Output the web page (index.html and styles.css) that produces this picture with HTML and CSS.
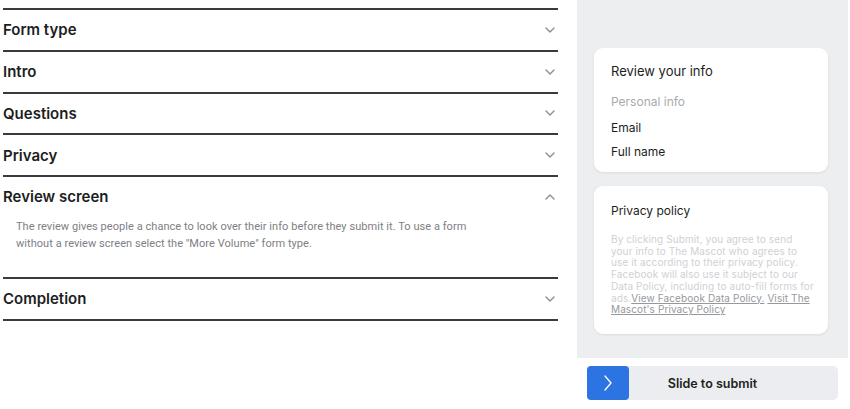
FILE: index.html
```html
<!DOCTYPE html>
<html lang="en">
<head>
<meta charset="utf-8">
<title>Form</title>
<link rel="stylesheet" href="styles.css">
</head>
<body>
<div class="page">
  <div class="settings">
    <div class="section">
      <div class="sec-head"><span>Form type</span><svg class="chev" viewBox="0 0 10 6"><path d="M1 1l4 4 4-4"/></svg></div>
    </div>
    <div class="section">
      <div class="sec-head"><span>Intro</span><svg class="chev" viewBox="0 0 10 6"><path d="M1 1l4 4 4-4"/></svg></div>
    </div>
    <div class="section">
      <div class="sec-head"><span>Questions</span><svg class="chev" viewBox="0 0 10 6"><path d="M1 1l4 4 4-4"/></svg></div>
    </div>
    <div class="section">
      <div class="sec-head"><span>Privacy</span><svg class="chev" viewBox="0 0 10 6"><path d="M1 1l4 4 4-4"/></svg></div>
    </div>
    <div class="section">
      <div class="sec-head"><span>Review screen</span><svg class="chev" viewBox="0 0 10 6"><path d="M1 5l4-4 4 4"/></svg></div>
      <p class="sec-body">The review gives people a chance to look over their info before they submit it. To use a form without a review screen select the "More Volume" form type.</p>
    </div>
    <div class="section last">
      <div class="sec-head"><span>Completion</span><svg class="chev" viewBox="0 0 10 6"><path d="M1 1l4 4 4-4"/></svg></div>
    </div>
  </div>
  <div class="preview">
    <div class="panel">
      <div class="card card-info">
        <div class="card-title">Review your info</div>
        <div class="muted">Personal info</div>
        <div class="field first">Email</div>
        <div class="field">Full name</div>
      </div>
      <div class="card card-privacy">
        <div class="card-title small">Privacy policy</div>
        <p class="legal">By clicking Submit, you agree to send<br>your info to The Mascot who agrees to<br>use it according to their privacy policy.<br>Facebook will also use it subject to our<br>Data Policy, including to auto-fill forms for<br>ads.<span class="lk">View Facebook Data Policy.</span> <span class="lk">Visit The</span><br><span class="lk">Mascot's Privacy Policy</span></p>
      </div>
    </div>
    <div class="slider">
      <div class="knob"><svg viewBox="0 0 8 16"><path d="M1 1l6 7-6 7"/></svg></div>
      <div class="slide-label">Slide to submit</div>
    </div>
  </div>
</div>
</body>
</html>
```
FILE: styles.css
```css
html, body {
  margin: 0;
  padding: 0;
  background: #ffffff;
}
body {
  font-family: Inter, "Liberation Sans", Arial, sans-serif;
  color: #1c1e21;
}
.page {
  display: flex;
  width: 850px;
  height: 409px;
}
.settings {
  width: 555px;
  padding: 8px 0 0 3px;
}
.section {
  border-top: 2px solid #3a3b3c;
}
.section.last {
  border-bottom: 2px solid #3a3b3c;
}
.sec-head {
  height: 39.75px;
  display: flex;
  align-items: center;
  justify-content: space-between;
  font-size: 15px;
  font-weight: 600;
  color: #1c1e21;
  padding-right: 3px;
}
.chev {
  width: 10px;
  height: 6px;
  fill: none;
  stroke: #8a8d91;
  stroke-width: 1.4;
  stroke-linecap: round;
  stroke-linejoin: round;
}
.sec-body {
  margin: 0;
  padding: 1px 60px 25px 13px;
  font-family: Roboto, "Liberation Sans", Arial, sans-serif;
  font-size: 11px;
  line-height: 17px;
  color: #7d8084;
  letter-spacing: 0.05px;
}
.preview {
  margin-left: 19px;
  width: 271px;
  display: flex;
  flex-direction: column;
}
.panel {
  height: 358px;
  background: #eceef0;
  padding: 48px 0 0 17px;
  box-sizing: border-box;
}
.card {
  width: 234px;
  background: #ffffff;
  border-radius: 9px;
  box-shadow: 0 1px 3px rgba(0,0,0,0.08);
  padding: 0 17px;
  box-sizing: border-box;
}
.card-info {
  height: 124px;
  padding-top: 15px;
}
.card-privacy {
  margin-top: 14px;
  height: 148px;
  padding-top: 16px;
}
.card-title {
  font-size: 13px;
  line-height: 17px;
  color: #1c1e21;
}
.card-title.small {
  font-size: 12px;
}
.muted {
  margin-top: 14px;
  font-size: 12px;
  line-height: 16px;
  color: #a8abaf;
}
.field {
  margin-top: 8px;
  font-size: 12px;
  line-height: 16px;
  color: #1c1e21;
}
.field.first {
  margin-top: 10px;
}
.legal {
  margin: 15px -12px 0 0;
  font-size: 10px;
  line-height: 11.7px;
  color: #cfd1d4;
  letter-spacing: 0.1px;
  white-space: nowrap;
}
.lk {
  color: #95989c;
  text-decoration: underline;
}
.slider {
  margin: 8px 0 0 10px;
  width: 251px;
  height: 34px;
  background: #ebedf0;
  border-radius: 5px;
  display: flex;
  align-items: center;
  position: relative;
}
.knob {
  width: 42px;
  height: 34px;
  background: #2d74e3;
  border-radius: 4px;
  display: flex;
  align-items: center;
  justify-content: center;
  position: absolute;
  left: 0;
  top: 0;
}
.knob svg {
  width: 8px;
  height: 16px;
  fill: none;
  stroke: #ffffff;
  stroke-width: 1.3;
  stroke-linecap: round;
  stroke-linejoin: round;
}
.slide-label {
  width: 100%;
  text-align: center;
  font-size: 12.5px;
  font-weight: 600;
  color: #1c1e21;
  padding-top: 1px;
}
```
